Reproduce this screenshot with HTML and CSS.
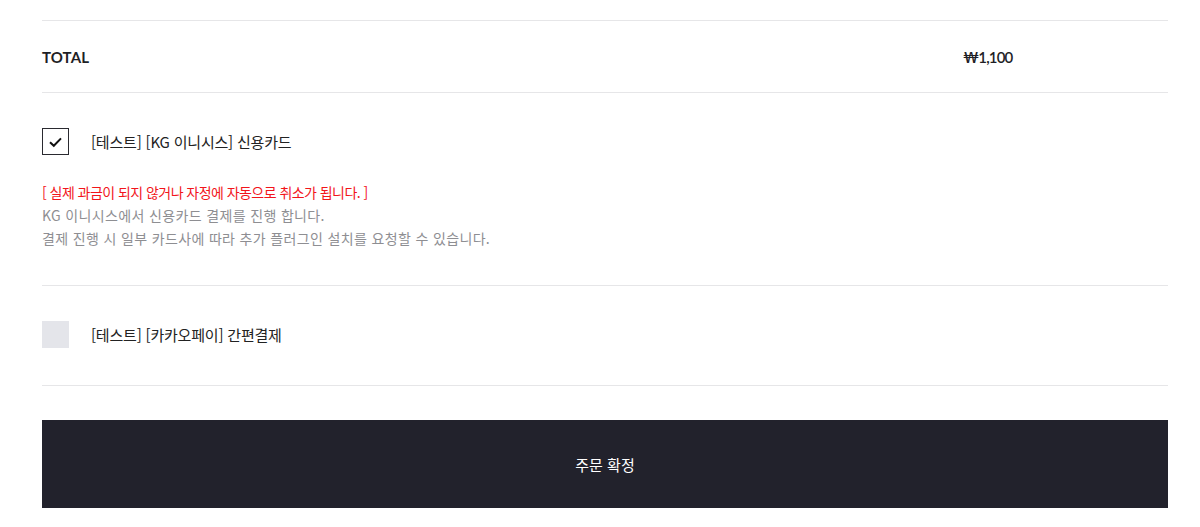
FILE: index.html
```html
<!DOCTYPE html>
<html lang="ko">
<head>
<meta charset="utf-8">
<link rel="stylesheet" href="styles.css">
</head>
<body>
<div class="wrap">
  <div class="spacer"></div>
  <div class="total-row">
    <div class="total-label">TOTAL</div>
    <div class="total-price">₩1,100</div>
  </div>
  <div class="pay pay-first">
    <div class="pay-head">
      <span class="box box-on">
        <svg width="15" height="12" viewBox="0 0 15 12"><path d="M2 6.2 L5.8 9.8 L13 2.4" fill="none" stroke="#111" stroke-width="2"/></svg>
      </span>
      <span class="pay-name">[테스트] [KG 이니시스] 신용카드</span>
    </div>
    <div class="pay-desc">
      <p class="warn">[ 실제 과금이 되지 않거나 자정에 자동으로 취소가 됩니다. ]</p>
      <p>KG 이니시스에서 신용카드 결제를 진행 합니다.</p>
      <p>결제 진행 시 일부 카드사에 따라 추가 플러그인 설치를 요청할 수 있습니다.</p>
    </div>
  </div>
  <div class="pay pay-second">
    <div class="pay-head">
      <span class="box box-off"></span>
      <span class="pay-name">[테스트] [카카오페이] 간편결제</span>
    </div>
  </div>
  <button class="confirm">주문 확정</button>
</div>
</body>
</html>
```

FILE: styles.css
```css
* { box-sizing: border-box; }
html, body { margin: 0; padding: 0; background: #fff; }
body {
  font-family: "Noto Sans CJK KR", "Noto Sans", sans-serif;
  color: #222;
}
.wrap {
  padding: 0 32px 0 42px;
}
.spacer {
  height: 21px;
  border-bottom: 1px solid #e6e6e8;
}
.total-row {
  display: flex;
  align-items: center;
  height: 72px;
  border-bottom: 1px solid #e6e6e8;
  font-family: "Lato", "Noto Sans CJK KR", sans-serif;
  font-size: 15px;
  font-weight: 700;
  color: #1f1f26;
}
.total-label { width: 921px; letter-spacing: 0.1px; }
.total-price { font-weight: 600; letter-spacing: -0.8px; }
.pay {
  border-bottom: 1px solid #e6e6e8;
}
.pay-first { padding: 35px 0 35px; }
.pay-second { padding: 35px 0 37px; }
.pay-head {
  display: flex;
  align-items: center;
  height: 27px;
}
.box {
  width: 27px;
  height: 27px;
  display: flex;
  align-items: center;
  justify-content: center;
  margin-right: 22px;
}
.box-on { border: 1.5px solid #2a2a30; }
.box-off { background: #e4e5ea; }
.pay-name {
  font-size: 15px;
  color: #222;
  letter-spacing: -0.2px;
}
.pay-desc {
  margin-top: 26px;
  font-size: 14px;
  line-height: 23px;
  color: #8e8e92;
  letter-spacing: 0.35px;
}
.pay-desc p { margin: 0; }
.pay-desc .warn { color: #f2151b; letter-spacing: -0.55px; }
.confirm {
  display: block;
  width: 100%;
  height: 88px;
  margin-top: 34px;
  border: 0;
  background: #22222c;
  color: #fff;
  font-family: "Noto Sans CJK KR", sans-serif;
  font-size: 15px;
  cursor: pointer;
}
```
